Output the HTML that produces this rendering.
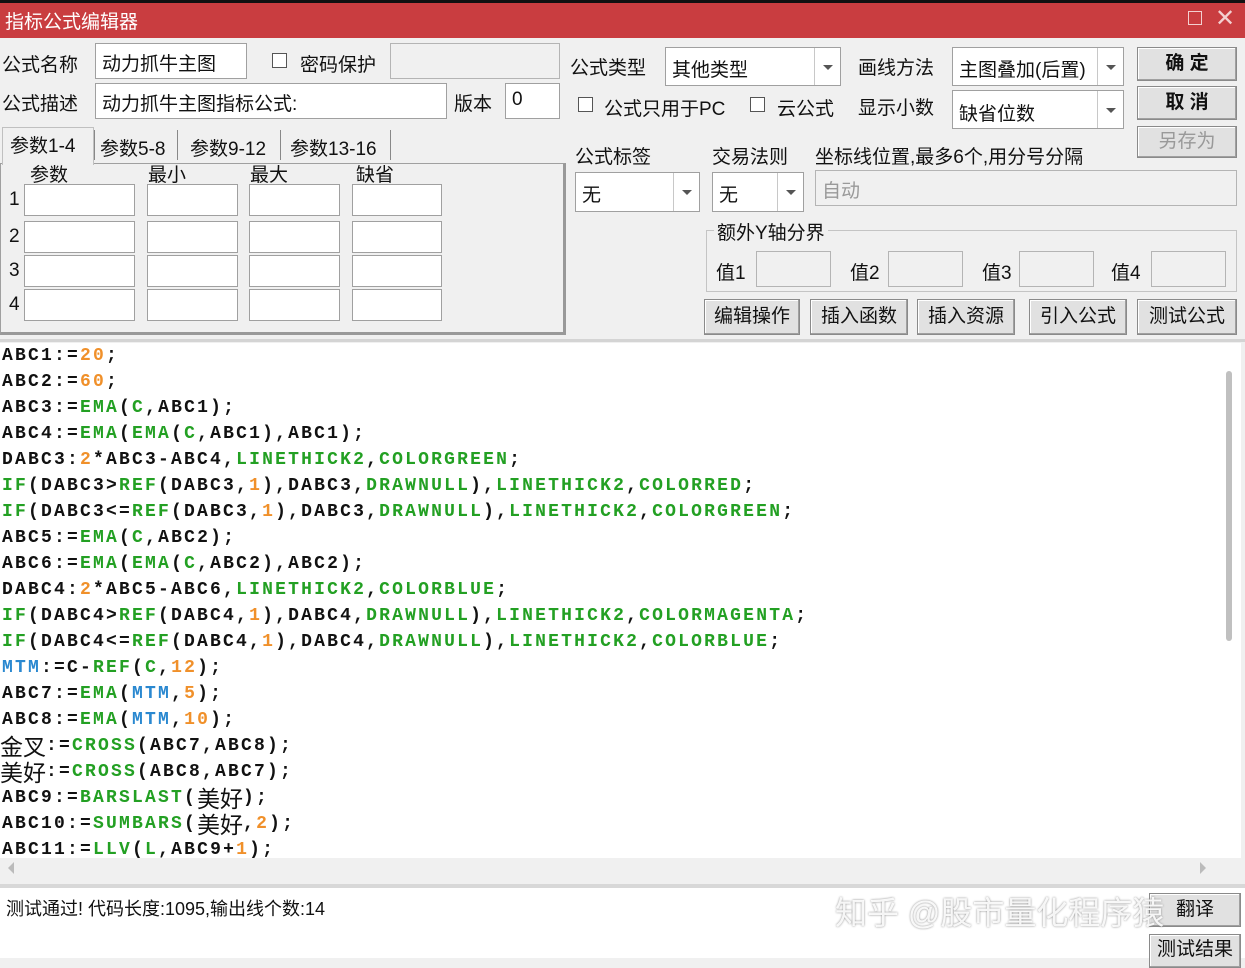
<!DOCTYPE html>
<html><head><meta charset="utf-8"><style>
*{margin:0;padding:0;box-sizing:border-box}
body{width:1245px;height:958px;overflow:hidden;background:#f0f0f0;font-family:"Liberation Sans","Noto Sans CJK SC",sans-serif;font-size:19px;color:#111;position:relative}
.a{position:absolute;white-space:nowrap}
.box{position:absolute;background:#fff;border:1px solid #a0a0a0}
.dis{position:absolute;background:#f0f0f0;border:1px solid #b4b4b4}
.btn{position:absolute;background:#e1e1e1;border:1px solid #8a8a8a;box-shadow:inset -1px -1px 0 #a0a0a0,inset 1px 1px 0 #fff;text-align:center;font-size:19px}
.cb{position:absolute;width:15px;height:15px;border:1px solid #555;background:#fff}
.dd{position:absolute;top:0;right:0;width:26px;height:100%;border-left:1px solid #c8c8c8}
.dd:after{content:"";position:absolute;left:8px;top:50%;margin-top:-2px;border:5px solid transparent;border-top:5px solid #555}
#code{position:absolute;left:0;top:343px;width:1241px;height:515px;background:#fff;overflow:hidden}
#code div{position:absolute;left:2px;font-family:"Liberation Mono",monospace;font-weight:bold;font-size:18px;letter-spacing:2.2px;white-space:nowrap;height:26px;line-height:26px}
.g{color:#23a023}.o{color:#f0902a}.b{color:#2a88d0}
.cj{font-family:"Noto Sans CJK SC",sans-serif;font-weight:normal;font-size:23px;letter-spacing:0;display:inline-block;height:26px;line-height:24px;vertical-align:top;overflow:visible}
</style></head><body>
<div class="a" style="left:0;top:0;width:1245px;height:3px;background:#111"></div>
<div class="a" style="left:0;top:3px;width:1245px;height:35px;background:#c93d40"></div>
<div class="a" style="left:5px;top:7px;color:#fff;font-size:19px">指标公式编辑器</div>
<div class="a" style="left:1188px;top:11px;width:14px;height:14px;border:1.5px solid #f3d0d0"></div>
<div class="a" style="left:1215px;top:4px;color:#f3d0d0;font-size:24px">✕</div>

<div class="a" style="left:2px;top:50px">公式名称</div>
<div class="box" style="left:95px;top:43px;width:152px;height:36px"><span class="a" style="left:6px;top:5px">动力抓牛主图</span></div>
<div class="cb" style="left:272px;top:53px"></div>
<div class="a" style="left:300px;top:50px">密码保护</div>
<div class="dis" style="left:390px;top:43px;width:170px;height:36px"></div>
<div class="a" style="left:2px;top:89px">公式描述</div>
<div class="box" style="left:95px;top:83px;width:352px;height:36px"><span class="a" style="left:6px;top:5px">动力抓牛主图指标公式:</span></div>
<div class="a" style="left:454px;top:89px">版本</div>
<div class="box" style="left:505px;top:83px;width:55px;height:36px"><span class="a" style="left:6px;top:5px">0</span></div>

<div class="a" style="left:0;top:163px;width:566px;height:172px;border:1px solid #a0a0a0;border-right:3px solid #999;border-bottom:3px solid #999;background:#f0f0f0"></div>
<div class="a" style="left:2px;top:127px;width:92px;height:38px;background:#f0f0f0;border:1px solid #c0c0c0;border-bottom:none"></div>
<div class="a" style="left:10px;top:131px">参数1-4</div>
<div class="a" style="left:100px;top:134px">参数5-8</div>
<div class="a" style="left:190px;top:134px">参数9-12</div>
<div class="a" style="left:290px;top:134px">参数13-16</div>
<div class="a" style="left:94px;top:130px;width:1px;height:30px;background:#888"></div>
<div class="a" style="left:177px;top:130px;width:1px;height:30px;background:#888"></div>
<div class="a" style="left:280px;top:130px;width:1px;height:30px;background:#888"></div>
<div class="a" style="left:390px;top:130px;width:1px;height:30px;background:#888"></div>
<div class="a" style="left:30px;top:160px">参数</div>
<div class="a" style="left:148px;top:160px">最小</div>
<div class="a" style="left:250px;top:160px">最大</div>
<div class="a" style="left:356px;top:160px">缺省</div>
<div class="a" style="left:9px;top:189px">1</div><div class="a" style="left:9px;top:226px">2</div><div class="a" style="left:9px;top:260px">3</div><div class="a" style="left:9px;top:294px">4</div>
<div class="box" style="left:24px;top:184px;width:111px;height:32px"></div><div class="box" style="left:147px;top:184px;width:91px;height:32px"></div><div class="box" style="left:249px;top:184px;width:91px;height:32px"></div><div class="box" style="left:352px;top:184px;width:90px;height:32px"></div>
<div class="box" style="left:24px;top:221px;width:111px;height:32px"></div><div class="box" style="left:147px;top:221px;width:91px;height:32px"></div><div class="box" style="left:249px;top:221px;width:91px;height:32px"></div><div class="box" style="left:352px;top:221px;width:90px;height:32px"></div>
<div class="box" style="left:24px;top:255px;width:111px;height:32px"></div><div class="box" style="left:147px;top:255px;width:91px;height:32px"></div><div class="box" style="left:249px;top:255px;width:91px;height:32px"></div><div class="box" style="left:352px;top:255px;width:90px;height:32px"></div>
<div class="box" style="left:24px;top:289px;width:111px;height:32px"></div><div class="box" style="left:147px;top:289px;width:91px;height:32px"></div><div class="box" style="left:249px;top:289px;width:91px;height:32px"></div><div class="box" style="left:352px;top:289px;width:90px;height:32px"></div>

<div class="a" style="left:570px;top:53px">公式类型</div>
<div class="box" style="left:665px;top:47px;width:176px;height:39px"><span class="a" style="left:6px;top:7px">其他类型</span><div class="dd"></div></div>
<div class="a" style="left:858px;top:53px">画线方法</div>
<div class="box" style="left:952px;top:47px;width:172px;height:39px"><span class="a" style="left:6px;top:7px">主图叠加(后置)</span><div class="dd"></div></div>
<div class="cb" style="left:578px;top:97px"></div>
<div class="a" style="left:604px;top:94px">公式只用于PC</div>
<div class="cb" style="left:750px;top:97px"></div>
<div class="a" style="left:777px;top:94px">云公式</div>
<div class="a" style="left:858px;top:93px">显示小数</div>
<div class="box" style="left:952px;top:90px;width:172px;height:39px"><span class="a" style="left:6px;top:8px">缺省位数</span><div class="dd"></div></div>
<div class="btn" style="left:1137px;top:47px;width:100px;height:34px;line-height:32px;font-weight:bold">确 定</div>
<div class="btn" style="left:1137px;top:86px;width:100px;height:34px;line-height:32px;font-weight:bold">取 消</div>
<div class="btn" style="left:1137px;top:126px;width:100px;height:32px;line-height:30px;color:#999">另存为</div>
<div class="a" style="left:575px;top:142px">公式标签</div>
<div class="a" style="left:712px;top:142px">交易法则</div>
<div class="a" style="left:815px;top:142px">坐标线位置,最多6个,用分号分隔</div>
<div class="box" style="left:575px;top:172px;width:125px;height:40px"><span class="a" style="left:6px;top:7px">无</span><div class="dd"></div></div>
<div class="box" style="left:712px;top:172px;width:92px;height:40px"><span class="a" style="left:6px;top:7px">无</span><div class="dd"></div></div>
<div class="dis" style="left:815px;top:170px;width:422px;height:36px"><span class="a" style="left:6px;top:5px;color:#999">自动</span></div>
<div class="a" style="left:706px;top:230px;width:531px;height:62px;border:1px solid #c4c4c4"></div>
<div class="a" style="left:714px;top:218px;background:#f0f0f0;padding:0 3px">额外Y轴分界</div>
<div class="a" style="left:716px;top:258px">值1</div><div class="dis" style="left:756px;top:251px;width:75px;height:36px"></div>
<div class="a" style="left:850px;top:258px">值2</div><div class="dis" style="left:888px;top:251px;width:75px;height:36px"></div>
<div class="a" style="left:982px;top:258px">值3</div><div class="dis" style="left:1019px;top:251px;width:75px;height:36px"></div>
<div class="a" style="left:1111px;top:258px">值4</div><div class="dis" style="left:1151px;top:251px;width:75px;height:36px"></div>
<div class="btn" style="left:704px;top:299px;width:96px;height:36px;line-height:34px">编辑操作</div>
<div class="btn" style="left:810px;top:299px;width:98px;height:36px;line-height:34px">插入函数</div>
<div class="btn" style="left:917px;top:299px;width:98px;height:36px;line-height:34px">插入资源</div>
<div class="btn" style="left:1029px;top:299px;width:98px;height:36px;line-height:34px">引入公式</div>
<div class="btn" style="left:1137px;top:299px;width:100px;height:36px;line-height:34px">测试公式</div>

<div class="a" style="left:0;top:339px;width:1245px;height:3px;background:#d4d4d4"></div>
<div id="code">
<div style="top:0">ABC1:=<span class="o">20</span>;</div>
<div style="top:26px">ABC2:=<span class="o">60</span>;</div>
<div style="top:52px">ABC3:=<span class="g">EMA</span>(<span class="g">C</span>,ABC1);</div>
<div style="top:78px">ABC4:=<span class="g">EMA</span>(<span class="g">EMA</span>(<span class="g">C</span>,ABC1),ABC1);</div>
<div style="top:104px">DABC3:<span class="o">2</span>*ABC3-ABC4,<span class="g">LINETHICK2</span>,<span class="g">COLORGREEN</span>;</div>
<div style="top:130px"><span class="g">IF</span>(DABC3&gt;<span class="g">REF</span>(DABC3,<span class="o">1</span>),DABC3,<span class="g">DRAWNULL</span>),<span class="g">LINETHICK2</span>,<span class="g">COLORRED</span>;</div>
<div style="top:156px"><span class="g">IF</span>(DABC3&lt;=<span class="g">REF</span>(DABC3,<span class="o">1</span>),DABC3,<span class="g">DRAWNULL</span>),<span class="g">LINETHICK2</span>,<span class="g">COLORGREEN</span>;</div>
<div style="top:182px">ABC5:=<span class="g">EMA</span>(<span class="g">C</span>,ABC2);</div>
<div style="top:208px">ABC6:=<span class="g">EMA</span>(<span class="g">EMA</span>(<span class="g">C</span>,ABC2),ABC2);</div>
<div style="top:234px">DABC4:<span class="o">2</span>*ABC5-ABC6,<span class="g">LINETHICK2</span>,<span class="g">COLORBLUE</span>;</div>
<div style="top:260px"><span class="g">IF</span>(DABC4&gt;<span class="g">REF</span>(DABC4,<span class="o">1</span>),DABC4,<span class="g">DRAWNULL</span>),<span class="g">LINETHICK2</span>,<span class="g">COLORMAGENTA</span>;</div>
<div style="top:286px"><span class="g">IF</span>(DABC4&lt;=<span class="g">REF</span>(DABC4,<span class="o">1</span>),DABC4,<span class="g">DRAWNULL</span>),<span class="g">LINETHICK2</span>,<span class="g">COLORBLUE</span>;</div>
<div style="top:312px"><span class="b">MTM</span>:=C-<span class="g">REF</span>(<span class="g">C</span>,<span class="o">12</span>);</div>
<div style="top:338px">ABC7:=<span class="g">EMA</span>(<span class="b">MTM</span>,<span class="o">5</span>);</div>
<div style="top:364px">ABC8:=<span class="g">EMA</span>(<span class="b">MTM</span>,<span class="o">10</span>);</div>
<div style="top:390px;left:0"><span class="cj">金叉</span>:=<span class="g">CROSS</span>(ABC7,ABC8);</div>
<div style="top:416px;left:0"><span class="cj">美好</span>:=<span class="g">CROSS</span>(ABC8,ABC7);</div>
<div style="top:442px">ABC9:=<span class="g">BARSLAST</span>(<span class="cj">美好</span>);</div>
<div style="top:468px">ABC10:=<span class="g">SUMBARS</span>(<span class="cj">美好</span>,<span class="o">2</span>);</div>
<div style="top:494px">ABC11:=<span class="g">LLV</span>(<span class="g">L</span>,ABC9+<span class="o">1</span>);</div>
<div class="a" style="left:1226px;top:28px;width:6px;height:270px;background:#c0c0c0;border-radius:3px"></div>
</div>
<div class="a" style="left:0;top:858px;width:1241px;height:26px;background:#f0f0f0"></div>
<div class="a" style="left:8px;top:862px;border:6px solid transparent;border-right:6px solid #bbb;border-left:none"></div>
<div class="a" style="left:1200px;top:862px;border:6px solid transparent;border-left:6px solid #bbb;border-right:none"></div>
<div class="a" style="left:0;top:884px;width:1245px;height:4px;background:#d8d8d8"></div>
<div class="a" style="left:0;top:888px;width:1245px;height:70px;background:#fff"></div>
<div class="a" style="left:6px;top:895px;font-size:18px">测试通过! 代码长度:1095,输出线个数:14</div>
<div class="btn" style="left:1149px;top:893px;width:92px;height:34px;line-height:32px">翻译</div>
<div class="btn" style="left:1149px;top:934px;width:92px;height:34px;line-height:30px">测试结果</div>
<div class="a" style="left:835px;top:888px;font-size:32px;color:rgba(255,255,255,0.9);text-shadow:0 0 2px #888">知乎 @股市量化程序猿</div>
</body></html>
